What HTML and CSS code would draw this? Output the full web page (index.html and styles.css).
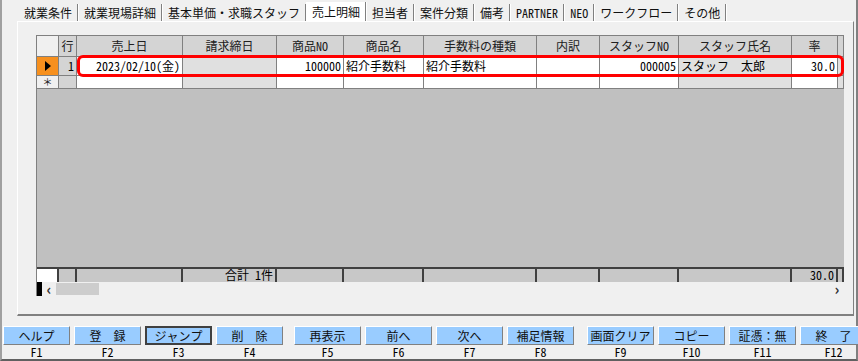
FILE: index.html
```html
<!DOCTYPE html>
<html lang="ja">
<head>
<meta charset="utf-8">
<link rel="stylesheet" href="styles.css">
</head>
<body>
<div class="win">
  <div class="tabs">
    <span class="tab">就業条件</span>
    <span class="tab">就業現場詳細</span>
    <span class="tab">基本単価・求職スタッフ</span>
    <span class="tab active">売上明細</span>
    <span class="tab">担当者</span>
    <span class="tab">案件分類</span>
    <span class="tab">備考</span>
    <span class="tab">PARTNER</span>
    <span class="tab">NEO</span>
    <span class="tab">ワークフロー</span>
    <span class="tab">その他</span>
  </div>
  <div class="panel">
    <div class="grid">
      <div class="row hdr">
        <div class="c corner"></div>
        <div class="c">行</div>
        <div class="c">売上日</div>
        <div class="c">請求締日</div>
        <div class="c">商品NO</div>
        <div class="c">商品名</div>
        <div class="c">手数料の種類</div>
        <div class="c">内訳</div>
        <div class="c">スタッフNO</div>
        <div class="c">スタッフ氏名</div>
        <div class="c">率</div>
        <div class="c"></div>
      </div>
      <div class="row data">
        <div class="c selcur"><span class="tri"></span></div>
        <div class="c num gray">1</div>
        <div class="c num">2023/02/10(金)</div>
        <div class="c ro"></div>
        <div class="c num">100000</div>
        <div class="c">紹介手数料</div>
        <div class="c">紹介手数料</div>
        <div class="c"></div>
        <div class="c num">000005</div>
        <div class="c ro">スタッフ　太郎</div>
        <div class="c num">30.0</div>
        <div class="c ro"></div>
      </div>
      <div class="row newrow">
        <div class="c selnew"><span class="ast">＊</span></div>
        <div class="c gray"></div>
        <div class="c"></div>
        <div class="c ro"></div>
        <div class="c"></div>
        <div class="c"></div>
        <div class="c"></div>
        <div class="c"></div>
        <div class="c"></div>
        <div class="c ro"></div>
        <div class="c"></div>
        <div class="c ro"></div>
      </div>
      <div class="body"></div>
      <div class="row foot">
        <div class="c fwhite"></div>
        <div class="c"></div>
        <div class="c"></div>
        <div class="c num">合計 1件</div>
        <div class="c"></div>
        <div class="c"></div>
        <div class="c"></div>
        <div class="c"></div>
        <div class="c"></div>
        <div class="c"></div>
        <div class="c num">30.0</div>
        <div class="c"></div>
      </div>
      <div class="hscroll">
        <span class="focusbar"></span>
        <span class="arrow">&lsaquo;</span>
        <span class="thumb"></span>
        <span class="spacer"></span>
        <span class="arrow">&rsaquo;</span>
      </div>
      <div class="mark"></div>
    </div>
  </div>
  <div class="fbar">
    <div class="grp">
      <div class="fk"><div class="btn">ヘルプ</div><div class="fl">F1</div></div>
      <div class="fk"><div class="btn">登　録</div><div class="fl">F2</div></div>
      <div class="fk"><div class="btn focus">ジャンプ</div><div class="fl">F3</div></div>
      <div class="fk"><div class="btn">削　除</div><div class="fl">F4</div></div>
    </div>
    <div class="grp">
      <div class="fk"><div class="btn">再表示</div><div class="fl">F5</div></div>
      <div class="fk"><div class="btn">前へ</div><div class="fl">F6</div></div>
      <div class="fk"><div class="btn">次へ</div><div class="fl">F7</div></div>
      <div class="fk"><div class="btn">補足情報</div><div class="fl">F8</div></div>
    </div>
    <div class="grp last">
      <div class="fk"><div class="btn">画面クリア</div><div class="fl">F9</div></div>
      <div class="fk"><div class="btn">コピー</div><div class="fl">F10</div></div>
      <div class="fk"><div class="btn">証憑：無</div><div class="fl">F11</div></div>
      <div class="fk"><div class="btn">終　了</div><div class="fl">F12</div></div>
    </div>
  </div>
</div>
</body>
</html>
```

FILE: styles.css
```css
* { box-sizing: border-box; }
html, body { margin: 0; padding: 0; }
body {
  width: 858px;
  height: 361px;
  overflow: hidden;
  background: #f0f0f0;
  font-family: "Noto Sans Mono CJK JP", "Noto Sans CJK JP", sans-serif;
  font-size: 12px;
  color: #000;
}
.win {
  width: 858px;
  height: 361px;
  border-left: 2px solid #a0a0a0;
  border-right: 2px solid #808080;
  border-bottom: 2px solid #606060;
  display: flex;
  flex-direction: column;
}
.tabs {
  display: flex;
  height: 21px;
  padding-left: 16px;
  padding-top: 4px;
}
.tab {
  height: 17px;
  line-height: 17px;
  padding: 0 5px 0 6px;
  border-right: 1px solid #808080;
  box-shadow: 1px 0 0 #fff;
  white-space: nowrap;
  color: #101010;
}
.tab.active {
  background: #fff;
  margin-top: -2px;
  height: 19px;
  line-height: 20px;
}
.panel {
  margin-left: 15px;
  width: 837px;
  height: 295px;
  border-left: 1px solid #fff;
  border-top: 1px solid #fff;
  border-right: 1px solid #808080;
  border-bottom: 2px solid #808080;
  padding: 13px 0 0 18px;
}
.grid {
  position: relative;
  width: 808px;
  height: 261px;
  display: flex;
  flex-direction: column;
  border-left: 1px solid #808080;
  border-top: 1px solid #808080;
}
.row {
  display: grid;
  grid-template-columns: 22px 18px 106px 94px 67px 80px 113px 63px 79px 113px 46px 6px;
}
.c {
  border-right: 1px solid #808080;
  border-bottom: 1px solid #808080;
  background: #fff;
  white-space: nowrap;
  overflow: hidden;
  padding: 0 2px;
}
.hdr .c {
  height: 21px;
  line-height: 20px;
  background: #d4d4d4;
  text-align: center;
  color: #202020;
}
.hdr .corner { background: #f0f0f0; }
.data .c { height: 19px; line-height: 18px; }
.newrow .c { height: 13px; line-height: 12px; }
.num { text-align: right; }
.gray { background: #d4d4d4; }
.ro { background: #e0e0e0; }
.selcur {
  background: #f7901e;
  display: flex;
  align-items: center;
  justify-content: center;
}
.tri {
  width: 0;
  height: 0;
  border-top: 5px solid transparent;
  border-bottom: 5px solid transparent;
  border-left: 6px solid #000;
}
.newrow .selnew {
  background: #f0f0f0;
  display: flex;
  align-items: center;
  justify-content: center;
  padding: 0;
  overflow: visible;
}
.ast {
  font-size: 10px;
  line-height: 10px;
  color: #202020;
}
.body {
  flex: 1;
  background: #c0c0c0;
}
.foot {
  border-top: 2px solid #404040;
}
.foot .c {
  height: 13px;
  line-height: 12px;
  background: #c8c8c8;
  border-right: 2px solid #404040;
  border-bottom: none;
  overflow: visible;
}
.foot .fwhite { background: #fff; }
.hscroll {
  height: 14px;
  display: flex;
  align-items: center;
  background: #f0f0f0;
}
.focusbar { width: 5px; height: 14px; background: #000; }
.arrow { width: 14px; text-align: center; font-size: 15px; line-height: 14px; color: #303030; font-weight: bold; }
.thumb { width: 43px; height: 12px; background: #cdcdcd; }
.spacer { flex: 1; }
.mark {
  position: absolute;
  left: 40px;
  top: 19px;
  width: 767px;
  height: 22px;
  border: 3px solid #f00;
  border-radius: 6px;
}
.fbar {
  display: flex;
  gap: 11px;
  padding-left: 1px;
  margin-top: 10px;
}
.grp { display: flex; gap: 4px; }
.grp.last { margin-left: 2px; }
.fk { width: 67px; display: flex; flex-direction: column; align-items: center; }
.btn {
  width: 67px;
  height: 19px;
  line-height: 17px;
  background: #99ccff;
  border: 1px solid;
  border-color: #fff #808080 #808080 #fff;
  text-align: center;
  color: #101010;
}
.btn.focus {
  border: 2px solid #404040;
  line-height: 15px;
}
.fl { height: 13px; line-height: 14px; }
```
